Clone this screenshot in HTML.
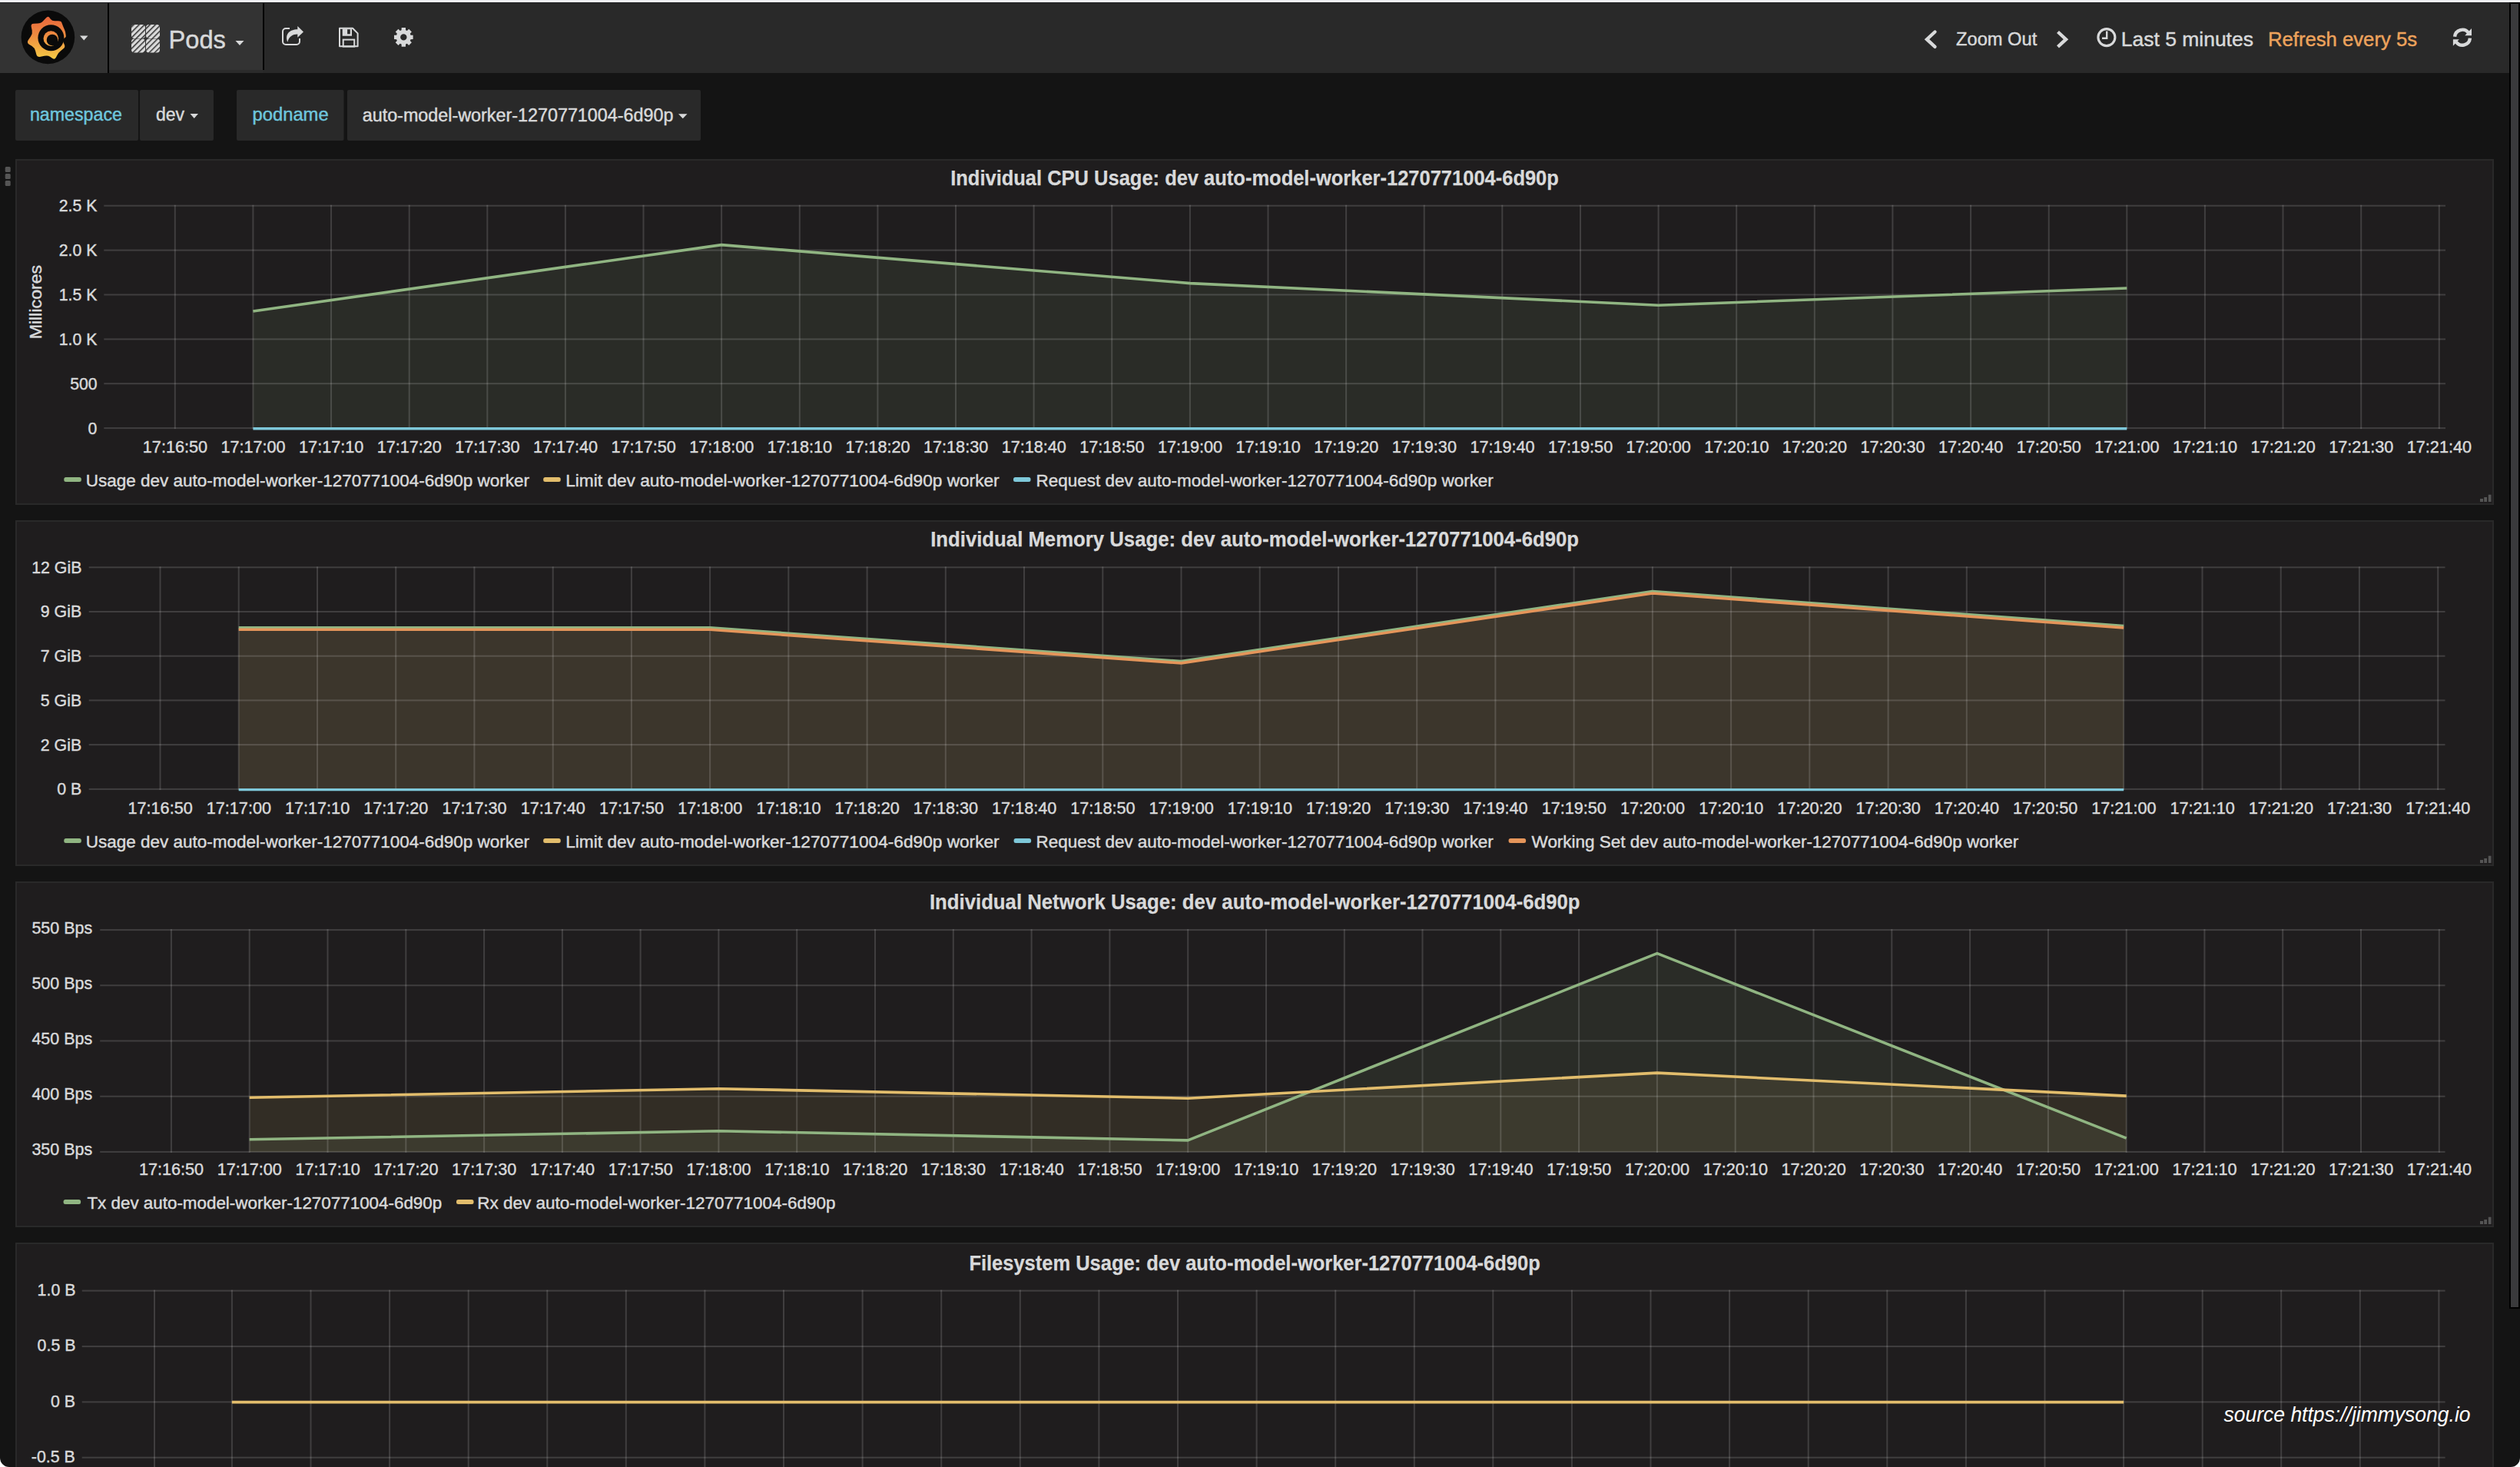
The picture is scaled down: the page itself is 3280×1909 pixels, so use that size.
<!DOCTYPE html>
<html><head><meta charset="utf-8"><title>Pods - Grafana</title>
<style>
html,body{margin:0;padding:0;background:#141414;width:3280px;height:1909px;overflow:hidden;}
svg{display:block;}
svg text{font-family:"Liberation Sans",sans-serif;}
</style></head><body>
<svg width="3280" height="1909" viewBox="0 0 3280 1909">
<rect x="0" y="0" width="3280" height="1909" fill="#141414"/>
<rect x="0" y="0" width="3280" height="3" fill="#eff0f4"/>
<rect x="0" y="3" width="3266" height="92" fill="#292929"/>
<rect x="0" y="3" width="3266" height="1" fill="#1e1f22"/>
<rect x="0" y="4" width="140" height="91" fill="#333333"/>
<rect x="142" y="4" width="200" height="87" fill="#333333"/>
<rect x="142" y="91" width="200" height="4" fill="#2b2b2b"/>
<rect x="140" y="4" width="2" height="91" fill="#000"/>
<rect x="342" y="4" width="2" height="87" fill="#000"/>
<defs><linearGradient id="lg" gradientUnits="userSpaceOnUse" x1="0" y1="18" x2="0" y2="78"><stop offset="0" stop-color="#e8603b"/><stop offset="0.45" stop-color="#ee8a40"/><stop offset="1" stop-color="#f5cc45"/></linearGradient><pattern id="hatch" patternUnits="userSpaceOnUse" width="5" height="5" patternTransform="rotate(-45)"><rect width="5" height="5" fill="#dadada"/><rect x="0" y="0" width="5" height="1.5" fill="#303030"/></pattern></defs>
<circle cx="62.4" cy="48.4" r="34.8" fill="#0a0a0a"/>
<path fill="url(#lg)" d="M59.49,23.63 Q62.40,20.40 64.06,22.58 L65.94,25.02 Q67.60,27.20 71.44,27.26 L75.76,27.34 Q79.60,27.40 80.43,29.67 L81.37,32.23 Q82.20,34.50 83.03,36.42 L83.97,38.58 Q84.80,40.50 85.22,42.87 L85.68,45.53 Q86.10,47.90 85.27,48.57 L84.33,49.33 Q83.50,50.00 82.83,50.83 L82.07,51.77 Q81.40,52.60 82.62,55.35 L83.98,58.45 Q85.20,61.20 82.26,63.60 L78.94,66.30 Q76.00,68.70 74.46,71.64 L72.74,74.96 Q71.20,77.90 68.32,75.98 L65.08,73.82 Q62.20,71.90 57.78,72.83 L52.82,73.87 Q48.40,74.80 47.31,70.77 L46.09,66.23 Q45.00,62.20 41.61,60.06 L37.79,57.64 Q34.40,55.50 37.02,51.69 L39.98,47.41 Q42.60,43.60 41.70,39.47 L40.70,34.83 Q39.80,30.70 44.12,30.64 L48.98,30.56 Q53.30,30.50 56.21,27.27 Z"/>
<circle cx="66.4" cy="49.3" r="17" fill="#0a0a0a"/>
<circle cx="66.3" cy="50.1" r="9.8" fill="url(#lg)"/>
<circle cx="68.0" cy="52.0" r="7.3" fill="#0a0a0a"/>
<circle cx="73.0" cy="56.6" r="3.8" fill="#0a0a0a"/>
<polygon points="104,46.5 114.5,46.5 109.25,52.5" fill="#d8d9da"/>
<rect x="171" y="32" width="18" height="18" rx="4" fill="url(#hatch)"/>
<rect x="190" y="32" width="18" height="18" rx="4" fill="url(#hatch)"/>
<rect x="171" y="50.5" width="18" height="18" rx="4" fill="url(#hatch)"/>
<rect x="190" y="50.5" width="18" height="18" rx="4" fill="url(#hatch)"/>
<text x="219.62" y="62.50" font-size="34" fill="#d8d9da" textLength="74.32" lengthAdjust="spacingAndGlyphs" stroke="#d8d9da" stroke-width="0.45">Pods</text>
<polygon points="306.5,53 317.5,53 312,59" fill="#d8d9da"/>
<path d="M377,37 H372 a4,4 0 0 0 -4,4 V54 a4,4 0 0 0 4,4 H386 a4,4 0 0 0 4,-4 V50" stroke="#d8d9da" stroke-width="2" fill="none"/>
<path d="M374.3,54.8 C370.5,45 376.5,38.3 387.3,38.3 V33.9 L395,41.4 L387.3,48.8 V44.5 C381,44.5 376,47.5 374.3,54.8 Z" fill="#d8d9da"/>
<path d="M442,36.8 H459 L465.6,43.4 V60.2 H442 Z" stroke="#d8d9da" stroke-width="2" fill="none" stroke-linejoin="round"/>
<path d="M445.7,37.5 H458 V46.8 H445.7 Z M452.1,38.2 V44.3 H455.8 V38.2 Z" fill="#d8d9da" fill-rule="evenodd"/>
<rect x="446.7" y="51.6" width="14.5" height="9" stroke="#d8d9da" stroke-width="2" fill="none"/>
<path fill="#d8d9da" fill-rule="evenodd" d="M522.55,39.20 L522.67,36.08 L527.93,36.08 L528.05,39.20 L529.86,39.95 L532.16,37.83 L535.87,41.54 L533.75,43.84 L534.50,45.65 L537.62,45.77 L537.62,51.03 L534.50,51.15 L533.75,52.96 L535.87,55.26 L532.16,58.97 L529.86,56.85 L528.05,57.60 L527.93,60.72 L522.67,60.72 L522.55,57.60 L520.74,56.85 L518.44,58.97 L514.73,55.26 L516.85,52.96 L516.10,51.15 L512.98,51.03 L512.98,45.77 L516.10,45.65 L516.85,43.84 L514.73,41.54 L518.44,37.83 L520.74,39.95 Z M529.5,48.4 A4.2,4.2 0 1 0 521.0999999999999,48.4 A4.2,4.2 0 1 0 529.5,48.4 Z"/>
<polyline points="2518.5,41.5 2508,51.2 2518.5,60.8" stroke="#d8d9da" stroke-width="4.4" fill="none" stroke-linecap="round"/>
<text x="2546.07" y="58.80" font-size="23" fill="#d8d9da" textLength="105.20" lengthAdjust="spacingAndGlyphs" stroke="#d8d9da" stroke-width="0.45">Zoom Out</text>
<polyline points="2678.5,41.5 2689,51.2 2678.5,60.8" stroke="#d8d9da" stroke-width="4.4" fill="none"/>
<circle cx="2741.9" cy="48.6" r="11" stroke="#d8d9da" stroke-width="3.1" fill="none"/>
<polyline points="2742.2,40.5 2742.2,49.8 2736,49.8" stroke="#d8d9da" stroke-width="2.4" fill="none"/>
<text x="2760.87" y="60.20" font-size="26" fill="#d8d9da" textLength="172.05" lengthAdjust="spacingAndGlyphs" stroke="#d8d9da" stroke-width="0.45">Last 5 minutes</text>
<text x="2952.03" y="60.20" font-size="26" fill="#eda35c" textLength="194.00" lengthAdjust="spacingAndGlyphs" stroke="#eda35c" stroke-width="0.45">Refresh every 5s</text>
<path d="M3195.1,47.8 A9.9,9.9 0 0 1 3213.1,43.0" stroke="#d8d9da" stroke-width="4.4" fill="none"/><polygon points="3217,37.1 3217,46.3 3208.2,46.3" fill="#d8d9da"/><path d="M3214.9,49.6 A9.9,9.9 0 0 1 3196.9,54.4" stroke="#d8d9da" stroke-width="4.4" fill="none"/><polygon points="3192.9,51.3 3192.9,59.7 3200.8,51.3" fill="#d8d9da"/>
<rect x="20" y="117" width="160" height="66" rx="2" fill="#292929"/>
<rect x="182" y="117" width="96" height="66" rx="2" fill="#292929"/>
<rect x="308" y="117" width="139.5" height="66" rx="2" fill="#292929"/>
<rect x="452" y="117" width="460" height="66" rx="2" fill="#292929"/>
<text x="38.98" y="157.30" font-size="23" fill="#6ec6dd" textLength="119.95" lengthAdjust="spacingAndGlyphs" stroke="#6ec6dd" stroke-width="0.45">namespace</text>
<text x="203.00" y="157.30" font-size="23" fill="#d8d9da" textLength="37.09" lengthAdjust="spacingAndGlyphs" stroke="#d8d9da" stroke-width="0.45">dev</text>
<polygon points="247.5,148 258,148 252.75,154" fill="#d8d9da"/>
<text x="328.47" y="157.30" font-size="23" fill="#6ec6dd" textLength="99.19" lengthAdjust="spacingAndGlyphs" stroke="#6ec6dd" stroke-width="0.45">podname</text>
<text x="471.69" y="158.30" font-size="23" fill="#d8d9da" textLength="404.77" lengthAdjust="spacingAndGlyphs" stroke="#d8d9da" stroke-width="0.45">auto-model-worker-1270771004-6d90p</text>
<polygon points="883,148.2 894.5,148.2 888.75,154.2" fill="#d8d9da"/>
<rect x="6.7" y="217" width="7" height="7" rx="1.5" fill="#555"/>
<rect x="6.7" y="226" width="7" height="7" rx="1.5" fill="#555"/>
<rect x="6.7" y="235" width="7" height="7" rx="1.5" fill="#555"/>
<rect x="21" y="208" width="3224" height="448" fill="#1f1d1e" stroke="#292929" stroke-width="2"/>
<text x="1237.18" y="241.00" font-size="28" fill="#d8d9da" font-weight="bold" textLength="791.70" lengthAdjust="spacingAndGlyphs" stroke="#d8d9da" stroke-width="0.25">Individual CPU Usage: dev auto-model-worker-1270771004-6d90p</text>
<path d="M329.4,557.1 L329.4,405.0 L939.1,318.6 L1548.9,368.6 L2158.6,397.2 L2768.3,375.0 L2768.3,557.1 Z" fill="#90b582" fill-opacity="0.1"/>
<rect x="135.3" y="266.7" width="3047.7" height="2" fill="#fff" fill-opacity="0.15"/>
<text x="76.78" y="275.10" font-size="22" fill="#d8d9da" textLength="49.58" lengthAdjust="spacingAndGlyphs" stroke="#d8d9da" stroke-width="0.45">2.5 K</text>
<rect x="135.3" y="324.6" width="3047.7" height="2" fill="#fff" fill-opacity="0.15"/>
<text x="76.78" y="333.00" font-size="22" fill="#d8d9da" textLength="49.58" lengthAdjust="spacingAndGlyphs" stroke="#d8d9da" stroke-width="0.45">2.0 K</text>
<rect x="135.3" y="382.5" width="3047.7" height="2" fill="#fff" fill-opacity="0.15"/>
<text x="76.78" y="390.90" font-size="22" fill="#d8d9da" textLength="49.58" lengthAdjust="spacingAndGlyphs" stroke="#d8d9da" stroke-width="0.45">1.5 K</text>
<rect x="135.3" y="440.4" width="3047.7" height="2" fill="#fff" fill-opacity="0.15"/>
<text x="76.78" y="448.80" font-size="22" fill="#d8d9da" textLength="49.58" lengthAdjust="spacingAndGlyphs" stroke="#d8d9da" stroke-width="0.45">1.0 K</text>
<rect x="135.3" y="498.2" width="3047.7" height="2" fill="#fff" fill-opacity="0.15"/>
<text x="91.26" y="506.60" font-size="22" fill="#d8d9da" textLength="35.43" lengthAdjust="spacingAndGlyphs" stroke="#d8d9da" stroke-width="0.45">500</text>
<rect x="135.3" y="556.1" width="3047.7" height="2" fill="#fff" fill-opacity="0.15"/>
<text x="114.42" y="564.50" font-size="22" fill="#d8d9da" textLength="11.82" lengthAdjust="spacingAndGlyphs" stroke="#d8d9da" stroke-width="0.45">0</text>
<rect x="226.8" y="266.7" width="2" height="291.4" fill="#fff" fill-opacity="0.15"/>
<text x="185.84" y="589.10" font-size="22" fill="#d8d9da" textLength="84.18" lengthAdjust="spacingAndGlyphs" stroke="#d8d9da" stroke-width="0.45">17:16:50</text>
<rect x="328.4" y="266.7" width="2" height="291.4" fill="#fff" fill-opacity="0.15"/>
<text x="287.46" y="589.10" font-size="22" fill="#d8d9da" textLength="84.18" lengthAdjust="spacingAndGlyphs" stroke="#d8d9da" stroke-width="0.45">17:17:00</text>
<rect x="430.0" y="266.7" width="2" height="291.4" fill="#fff" fill-opacity="0.15"/>
<text x="389.08" y="589.10" font-size="22" fill="#d8d9da" textLength="84.18" lengthAdjust="spacingAndGlyphs" stroke="#d8d9da" stroke-width="0.45">17:17:10</text>
<rect x="531.7" y="266.7" width="2" height="291.4" fill="#fff" fill-opacity="0.15"/>
<text x="490.70" y="589.10" font-size="22" fill="#d8d9da" textLength="84.18" lengthAdjust="spacingAndGlyphs" stroke="#d8d9da" stroke-width="0.45">17:17:20</text>
<rect x="633.3" y="266.7" width="2" height="291.4" fill="#fff" fill-opacity="0.15"/>
<text x="592.32" y="589.10" font-size="22" fill="#d8d9da" textLength="84.18" lengthAdjust="spacingAndGlyphs" stroke="#d8d9da" stroke-width="0.45">17:17:30</text>
<rect x="734.9" y="266.7" width="2" height="291.4" fill="#fff" fill-opacity="0.15"/>
<text x="693.94" y="589.10" font-size="22" fill="#d8d9da" textLength="84.18" lengthAdjust="spacingAndGlyphs" stroke="#d8d9da" stroke-width="0.45">17:17:40</text>
<rect x="836.5" y="266.7" width="2" height="291.4" fill="#fff" fill-opacity="0.15"/>
<text x="795.56" y="589.10" font-size="22" fill="#d8d9da" textLength="84.18" lengthAdjust="spacingAndGlyphs" stroke="#d8d9da" stroke-width="0.45">17:17:50</text>
<rect x="938.1" y="266.7" width="2" height="291.4" fill="#fff" fill-opacity="0.15"/>
<text x="897.18" y="589.10" font-size="22" fill="#d8d9da" textLength="84.18" lengthAdjust="spacingAndGlyphs" stroke="#d8d9da" stroke-width="0.45">17:18:00</text>
<rect x="1039.8" y="266.7" width="2" height="291.4" fill="#fff" fill-opacity="0.15"/>
<text x="998.80" y="589.10" font-size="22" fill="#d8d9da" textLength="84.18" lengthAdjust="spacingAndGlyphs" stroke="#d8d9da" stroke-width="0.45">17:18:10</text>
<rect x="1141.4" y="266.7" width="2" height="291.4" fill="#fff" fill-opacity="0.15"/>
<text x="1100.42" y="589.10" font-size="22" fill="#d8d9da" textLength="84.18" lengthAdjust="spacingAndGlyphs" stroke="#d8d9da" stroke-width="0.45">17:18:20</text>
<rect x="1243.0" y="266.7" width="2" height="291.4" fill="#fff" fill-opacity="0.15"/>
<text x="1202.04" y="589.10" font-size="22" fill="#d8d9da" textLength="84.18" lengthAdjust="spacingAndGlyphs" stroke="#d8d9da" stroke-width="0.45">17:18:30</text>
<rect x="1344.6" y="266.7" width="2" height="291.4" fill="#fff" fill-opacity="0.15"/>
<text x="1303.66" y="589.10" font-size="22" fill="#d8d9da" textLength="84.18" lengthAdjust="spacingAndGlyphs" stroke="#d8d9da" stroke-width="0.45">17:18:40</text>
<rect x="1446.2" y="266.7" width="2" height="291.4" fill="#fff" fill-opacity="0.15"/>
<text x="1405.28" y="589.10" font-size="22" fill="#d8d9da" textLength="84.18" lengthAdjust="spacingAndGlyphs" stroke="#d8d9da" stroke-width="0.45">17:18:50</text>
<rect x="1547.9" y="266.7" width="2" height="291.4" fill="#fff" fill-opacity="0.15"/>
<text x="1506.90" y="589.10" font-size="22" fill="#d8d9da" textLength="84.18" lengthAdjust="spacingAndGlyphs" stroke="#d8d9da" stroke-width="0.45">17:19:00</text>
<rect x="1649.5" y="266.7" width="2" height="291.4" fill="#fff" fill-opacity="0.15"/>
<text x="1608.52" y="589.10" font-size="22" fill="#d8d9da" textLength="84.18" lengthAdjust="spacingAndGlyphs" stroke="#d8d9da" stroke-width="0.45">17:19:10</text>
<rect x="1751.1" y="266.7" width="2" height="291.4" fill="#fff" fill-opacity="0.15"/>
<text x="1710.14" y="589.10" font-size="22" fill="#d8d9da" textLength="84.18" lengthAdjust="spacingAndGlyphs" stroke="#d8d9da" stroke-width="0.45">17:19:20</text>
<rect x="1852.7" y="266.7" width="2" height="291.4" fill="#fff" fill-opacity="0.15"/>
<text x="1811.76" y="589.10" font-size="22" fill="#d8d9da" textLength="84.18" lengthAdjust="spacingAndGlyphs" stroke="#d8d9da" stroke-width="0.45">17:19:30</text>
<rect x="1954.3" y="266.7" width="2" height="291.4" fill="#fff" fill-opacity="0.15"/>
<text x="1913.38" y="589.10" font-size="22" fill="#d8d9da" textLength="84.18" lengthAdjust="spacingAndGlyphs" stroke="#d8d9da" stroke-width="0.45">17:19:40</text>
<rect x="2056.0" y="266.7" width="2" height="291.4" fill="#fff" fill-opacity="0.15"/>
<text x="2015.00" y="589.10" font-size="22" fill="#d8d9da" textLength="84.18" lengthAdjust="spacingAndGlyphs" stroke="#d8d9da" stroke-width="0.45">17:19:50</text>
<rect x="2157.6" y="266.7" width="2" height="291.4" fill="#fff" fill-opacity="0.15"/>
<text x="2116.62" y="589.10" font-size="22" fill="#d8d9da" textLength="84.18" lengthAdjust="spacingAndGlyphs" stroke="#d8d9da" stroke-width="0.45">17:20:00</text>
<rect x="2259.2" y="266.7" width="2" height="291.4" fill="#fff" fill-opacity="0.15"/>
<text x="2218.24" y="589.10" font-size="22" fill="#d8d9da" textLength="84.18" lengthAdjust="spacingAndGlyphs" stroke="#d8d9da" stroke-width="0.45">17:20:10</text>
<rect x="2360.8" y="266.7" width="2" height="291.4" fill="#fff" fill-opacity="0.15"/>
<text x="2319.86" y="589.10" font-size="22" fill="#d8d9da" textLength="84.18" lengthAdjust="spacingAndGlyphs" stroke="#d8d9da" stroke-width="0.45">17:20:20</text>
<rect x="2462.4" y="266.7" width="2" height="291.4" fill="#fff" fill-opacity="0.15"/>
<text x="2421.48" y="589.10" font-size="22" fill="#d8d9da" textLength="84.18" lengthAdjust="spacingAndGlyphs" stroke="#d8d9da" stroke-width="0.45">17:20:30</text>
<rect x="2564.1" y="266.7" width="2" height="291.4" fill="#fff" fill-opacity="0.15"/>
<text x="2523.10" y="589.10" font-size="22" fill="#d8d9da" textLength="84.18" lengthAdjust="spacingAndGlyphs" stroke="#d8d9da" stroke-width="0.45">17:20:40</text>
<rect x="2665.7" y="266.7" width="2" height="291.4" fill="#fff" fill-opacity="0.15"/>
<text x="2624.72" y="589.10" font-size="22" fill="#d8d9da" textLength="84.18" lengthAdjust="spacingAndGlyphs" stroke="#d8d9da" stroke-width="0.45">17:20:50</text>
<rect x="2767.3" y="266.7" width="2" height="291.4" fill="#fff" fill-opacity="0.15"/>
<text x="2726.34" y="589.10" font-size="22" fill="#d8d9da" textLength="84.18" lengthAdjust="spacingAndGlyphs" stroke="#d8d9da" stroke-width="0.45">17:21:00</text>
<rect x="2868.9" y="266.7" width="2" height="291.4" fill="#fff" fill-opacity="0.15"/>
<text x="2827.96" y="589.10" font-size="22" fill="#d8d9da" textLength="84.18" lengthAdjust="spacingAndGlyphs" stroke="#d8d9da" stroke-width="0.45">17:21:10</text>
<rect x="2970.5" y="266.7" width="2" height="291.4" fill="#fff" fill-opacity="0.15"/>
<text x="2929.58" y="589.10" font-size="22" fill="#d8d9da" textLength="84.18" lengthAdjust="spacingAndGlyphs" stroke="#d8d9da" stroke-width="0.45">17:21:20</text>
<rect x="3072.2" y="266.7" width="2" height="291.4" fill="#fff" fill-opacity="0.15"/>
<text x="3031.20" y="589.10" font-size="22" fill="#d8d9da" textLength="84.18" lengthAdjust="spacingAndGlyphs" stroke="#d8d9da" stroke-width="0.45">17:21:30</text>
<rect x="3173.8" y="266.7" width="2" height="291.4" fill="#fff" fill-opacity="0.15"/>
<text x="3132.82" y="589.10" font-size="22" fill="#d8d9da" textLength="84.18" lengthAdjust="spacingAndGlyphs" stroke="#d8d9da" stroke-width="0.45">17:21:40</text>
<polyline points="329.4,405.0 939.1,318.6 1548.9,368.6 2158.6,397.2 2768.3,375.0" stroke="#90b582" stroke-width="3.6" fill="none" stroke-linejoin="round"/>
<polyline points="329.4,557.8 2768.3,557.8" stroke="#7ec8d9" stroke-width="3.4" fill="none" stroke-linejoin="round"/>
<rect x="83.3" y="621" width="22.5" height="6" rx="2.5" fill="#90b582"/>
<text x="111.86" y="632.80" font-size="22" fill="#d8d9da" textLength="577.04" lengthAdjust="spacingAndGlyphs" stroke="#d8d9da" stroke-width="0.45">Usage dev auto-model-worker-1270771004-6d90p worker</text>
<rect x="707.2" y="621" width="22.5" height="6" rx="2.5" fill="#e2bd6c"/>
<text x="736.24" y="632.80" font-size="22" fill="#d8d9da" textLength="564.42" lengthAdjust="spacingAndGlyphs" stroke="#d8d9da" stroke-width="0.45">Limit dev auto-model-worker-1270771004-6d90p worker</text>
<rect x="1319.0" y="621" width="22.5" height="6" rx="2.5" fill="#7ec8d9"/>
<text x="1348.56" y="632.80" font-size="22" fill="#d8d9da" textLength="595.29" lengthAdjust="spacingAndGlyphs" stroke="#d8d9da" stroke-width="0.45">Request dev auto-model-worker-1270771004-6d90p worker</text>
<rect x="3228" y="649" width="4" height="4" fill="#555"/><rect x="3233.2" y="647" width="3.8" height="6" fill="#555"/><rect x="3238.8" y="643.7" width="3.7" height="9.3" fill="#555"/>
<text x="343.39" y="0.00" font-size="22" fill="#d8d9da" textLength="96.53" lengthAdjust="spacingAndGlyphs" transform="translate(54,784.7) rotate(-90 0 0)" stroke="#d8d9da" stroke-width="0.45">Millicores</text>
<rect x="21" y="678" width="3224" height="448" fill="#1f1d1e" stroke="#292929" stroke-width="2"/>
<text x="1211.16" y="711.10" font-size="28" fill="#d8d9da" font-weight="bold" textLength="843.94" lengthAdjust="spacingAndGlyphs" stroke="#d8d9da" stroke-width="0.25">Individual Memory Usage: dev auto-model-worker-1270771004-6d90p</text>
<path d="M310.7,1026.9 L310.7,816.9 L924.1,816.9 L1537.5,860.5 L2150.9,769.6 L2764.2,814.5 L2764.2,1026.9 Z" fill="#90b582" fill-opacity="0.1"/>
<path d="M310.7,1026.9 L310.7,819.3 L924.1,819.3 L1537.5,862.9 L2150.9,772.0 L2764.2,816.9 L2764.2,1026.9 Z" fill="#e5955a" fill-opacity="0.1"/>
<rect x="115.7" y="737.3" width="3066.8" height="2" fill="#fff" fill-opacity="0.15"/>
<text x="41.18" y="745.70" font-size="22" fill="#d8d9da" textLength="65.25" lengthAdjust="spacingAndGlyphs" stroke="#d8d9da" stroke-width="0.45">12 GiB</text>
<rect x="115.7" y="795.0" width="3066.8" height="2" fill="#fff" fill-opacity="0.15"/>
<text x="52.82" y="803.40" font-size="22" fill="#d8d9da" textLength="53.38" lengthAdjust="spacingAndGlyphs" stroke="#d8d9da" stroke-width="0.45">9 GiB</text>
<rect x="115.7" y="852.7" width="3066.8" height="2" fill="#fff" fill-opacity="0.15"/>
<text x="52.82" y="861.10" font-size="22" fill="#d8d9da" textLength="53.38" lengthAdjust="spacingAndGlyphs" stroke="#d8d9da" stroke-width="0.45">7 GiB</text>
<rect x="115.7" y="910.4" width="3066.8" height="2" fill="#fff" fill-opacity="0.15"/>
<text x="52.82" y="918.80" font-size="22" fill="#d8d9da" textLength="53.38" lengthAdjust="spacingAndGlyphs" stroke="#d8d9da" stroke-width="0.45">5 GiB</text>
<rect x="115.7" y="968.1" width="3066.8" height="2" fill="#fff" fill-opacity="0.15"/>
<text x="52.82" y="976.50" font-size="22" fill="#d8d9da" textLength="53.38" lengthAdjust="spacingAndGlyphs" stroke="#d8d9da" stroke-width="0.45">2 GiB</text>
<rect x="115.7" y="1025.9" width="3066.8" height="2" fill="#fff" fill-opacity="0.15"/>
<text x="74.16" y="1034.30" font-size="22" fill="#d8d9da" textLength="32.04" lengthAdjust="spacingAndGlyphs" stroke="#d8d9da" stroke-width="0.45">0 B</text>
<rect x="207.5" y="737.3" width="2" height="290.6" fill="#fff" fill-opacity="0.15"/>
<text x="166.54" y="1059.10" font-size="22" fill="#d8d9da" textLength="84.18" lengthAdjust="spacingAndGlyphs" stroke="#d8d9da" stroke-width="0.45">17:16:50</text>
<rect x="309.7" y="737.3" width="2" height="290.6" fill="#fff" fill-opacity="0.15"/>
<text x="268.77" y="1059.10" font-size="22" fill="#d8d9da" textLength="84.18" lengthAdjust="spacingAndGlyphs" stroke="#d8d9da" stroke-width="0.45">17:17:00</text>
<rect x="412.0" y="737.3" width="2" height="290.6" fill="#fff" fill-opacity="0.15"/>
<text x="371.00" y="1059.10" font-size="22" fill="#d8d9da" textLength="84.18" lengthAdjust="spacingAndGlyphs" stroke="#d8d9da" stroke-width="0.45">17:17:10</text>
<rect x="514.2" y="737.3" width="2" height="290.6" fill="#fff" fill-opacity="0.15"/>
<text x="473.23" y="1059.10" font-size="22" fill="#d8d9da" textLength="84.18" lengthAdjust="spacingAndGlyphs" stroke="#d8d9da" stroke-width="0.45">17:17:20</text>
<rect x="616.4" y="737.3" width="2" height="290.6" fill="#fff" fill-opacity="0.15"/>
<text x="575.46" y="1059.10" font-size="22" fill="#d8d9da" textLength="84.18" lengthAdjust="spacingAndGlyphs" stroke="#d8d9da" stroke-width="0.45">17:17:30</text>
<rect x="718.7" y="737.3" width="2" height="290.6" fill="#fff" fill-opacity="0.15"/>
<text x="677.69" y="1059.10" font-size="22" fill="#d8d9da" textLength="84.18" lengthAdjust="spacingAndGlyphs" stroke="#d8d9da" stroke-width="0.45">17:17:40</text>
<rect x="820.9" y="737.3" width="2" height="290.6" fill="#fff" fill-opacity="0.15"/>
<text x="779.92" y="1059.10" font-size="22" fill="#d8d9da" textLength="84.18" lengthAdjust="spacingAndGlyphs" stroke="#d8d9da" stroke-width="0.45">17:17:50</text>
<rect x="923.1" y="737.3" width="2" height="290.6" fill="#fff" fill-opacity="0.15"/>
<text x="882.15" y="1059.10" font-size="22" fill="#d8d9da" textLength="84.18" lengthAdjust="spacingAndGlyphs" stroke="#d8d9da" stroke-width="0.45">17:18:00</text>
<rect x="1025.3" y="737.3" width="2" height="290.6" fill="#fff" fill-opacity="0.15"/>
<text x="984.38" y="1059.10" font-size="22" fill="#d8d9da" textLength="84.18" lengthAdjust="spacingAndGlyphs" stroke="#d8d9da" stroke-width="0.45">17:18:10</text>
<rect x="1127.6" y="737.3" width="2" height="290.6" fill="#fff" fill-opacity="0.15"/>
<text x="1086.61" y="1059.10" font-size="22" fill="#d8d9da" textLength="84.18" lengthAdjust="spacingAndGlyphs" stroke="#d8d9da" stroke-width="0.45">17:18:20</text>
<rect x="1229.8" y="737.3" width="2" height="290.6" fill="#fff" fill-opacity="0.15"/>
<text x="1188.84" y="1059.10" font-size="22" fill="#d8d9da" textLength="84.18" lengthAdjust="spacingAndGlyphs" stroke="#d8d9da" stroke-width="0.45">17:18:30</text>
<rect x="1332.0" y="737.3" width="2" height="290.6" fill="#fff" fill-opacity="0.15"/>
<text x="1291.07" y="1059.10" font-size="22" fill="#d8d9da" textLength="84.18" lengthAdjust="spacingAndGlyphs" stroke="#d8d9da" stroke-width="0.45">17:18:40</text>
<rect x="1434.3" y="737.3" width="2" height="290.6" fill="#fff" fill-opacity="0.15"/>
<text x="1393.30" y="1059.10" font-size="22" fill="#d8d9da" textLength="84.18" lengthAdjust="spacingAndGlyphs" stroke="#d8d9da" stroke-width="0.45">17:18:50</text>
<rect x="1536.5" y="737.3" width="2" height="290.6" fill="#fff" fill-opacity="0.15"/>
<text x="1495.53" y="1059.10" font-size="22" fill="#d8d9da" textLength="84.18" lengthAdjust="spacingAndGlyphs" stroke="#d8d9da" stroke-width="0.45">17:19:00</text>
<rect x="1638.7" y="737.3" width="2" height="290.6" fill="#fff" fill-opacity="0.15"/>
<text x="1597.76" y="1059.10" font-size="22" fill="#d8d9da" textLength="84.18" lengthAdjust="spacingAndGlyphs" stroke="#d8d9da" stroke-width="0.45">17:19:10</text>
<rect x="1741.0" y="737.3" width="2" height="290.6" fill="#fff" fill-opacity="0.15"/>
<text x="1699.99" y="1059.10" font-size="22" fill="#d8d9da" textLength="84.18" lengthAdjust="spacingAndGlyphs" stroke="#d8d9da" stroke-width="0.45">17:19:20</text>
<rect x="1843.2" y="737.3" width="2" height="290.6" fill="#fff" fill-opacity="0.15"/>
<text x="1802.22" y="1059.10" font-size="22" fill="#d8d9da" textLength="84.18" lengthAdjust="spacingAndGlyphs" stroke="#d8d9da" stroke-width="0.45">17:19:30</text>
<rect x="1945.4" y="737.3" width="2" height="290.6" fill="#fff" fill-opacity="0.15"/>
<text x="1904.45" y="1059.10" font-size="22" fill="#d8d9da" textLength="84.18" lengthAdjust="spacingAndGlyphs" stroke="#d8d9da" stroke-width="0.45">17:19:40</text>
<rect x="2047.6" y="737.3" width="2" height="290.6" fill="#fff" fill-opacity="0.15"/>
<text x="2006.68" y="1059.10" font-size="22" fill="#d8d9da" textLength="84.18" lengthAdjust="spacingAndGlyphs" stroke="#d8d9da" stroke-width="0.45">17:19:50</text>
<rect x="2149.9" y="737.3" width="2" height="290.6" fill="#fff" fill-opacity="0.15"/>
<text x="2108.91" y="1059.10" font-size="22" fill="#d8d9da" textLength="84.18" lengthAdjust="spacingAndGlyphs" stroke="#d8d9da" stroke-width="0.45">17:20:00</text>
<rect x="2252.1" y="737.3" width="2" height="290.6" fill="#fff" fill-opacity="0.15"/>
<text x="2211.14" y="1059.10" font-size="22" fill="#d8d9da" textLength="84.18" lengthAdjust="spacingAndGlyphs" stroke="#d8d9da" stroke-width="0.45">17:20:10</text>
<rect x="2354.3" y="737.3" width="2" height="290.6" fill="#fff" fill-opacity="0.15"/>
<text x="2313.37" y="1059.10" font-size="22" fill="#d8d9da" textLength="84.18" lengthAdjust="spacingAndGlyphs" stroke="#d8d9da" stroke-width="0.45">17:20:20</text>
<rect x="2456.6" y="737.3" width="2" height="290.6" fill="#fff" fill-opacity="0.15"/>
<text x="2415.60" y="1059.10" font-size="22" fill="#d8d9da" textLength="84.18" lengthAdjust="spacingAndGlyphs" stroke="#d8d9da" stroke-width="0.45">17:20:30</text>
<rect x="2558.8" y="737.3" width="2" height="290.6" fill="#fff" fill-opacity="0.15"/>
<text x="2517.83" y="1059.10" font-size="22" fill="#d8d9da" textLength="84.18" lengthAdjust="spacingAndGlyphs" stroke="#d8d9da" stroke-width="0.45">17:20:40</text>
<rect x="2661.0" y="737.3" width="2" height="290.6" fill="#fff" fill-opacity="0.15"/>
<text x="2620.06" y="1059.10" font-size="22" fill="#d8d9da" textLength="84.18" lengthAdjust="spacingAndGlyphs" stroke="#d8d9da" stroke-width="0.45">17:20:50</text>
<rect x="2763.2" y="737.3" width="2" height="290.6" fill="#fff" fill-opacity="0.15"/>
<text x="2722.29" y="1059.10" font-size="22" fill="#d8d9da" textLength="84.18" lengthAdjust="spacingAndGlyphs" stroke="#d8d9da" stroke-width="0.45">17:21:00</text>
<rect x="2865.5" y="737.3" width="2" height="290.6" fill="#fff" fill-opacity="0.15"/>
<text x="2824.52" y="1059.10" font-size="22" fill="#d8d9da" textLength="84.18" lengthAdjust="spacingAndGlyphs" stroke="#d8d9da" stroke-width="0.45">17:21:10</text>
<rect x="2967.7" y="737.3" width="2" height="290.6" fill="#fff" fill-opacity="0.15"/>
<text x="2926.75" y="1059.10" font-size="22" fill="#d8d9da" textLength="84.18" lengthAdjust="spacingAndGlyphs" stroke="#d8d9da" stroke-width="0.45">17:21:20</text>
<rect x="3069.9" y="737.3" width="2" height="290.6" fill="#fff" fill-opacity="0.15"/>
<text x="3028.98" y="1059.10" font-size="22" fill="#d8d9da" textLength="84.18" lengthAdjust="spacingAndGlyphs" stroke="#d8d9da" stroke-width="0.45">17:21:30</text>
<rect x="3172.2" y="737.3" width="2" height="290.6" fill="#fff" fill-opacity="0.15"/>
<text x="3131.21" y="1059.10" font-size="22" fill="#d8d9da" textLength="84.18" lengthAdjust="spacingAndGlyphs" stroke="#d8d9da" stroke-width="0.45">17:21:40</text>
<polyline points="310.7,816.9 924.1,816.9 1537.5,860.5 2150.9,769.6 2764.2,814.5" stroke="#90b582" stroke-width="3.6" fill="none" stroke-linejoin="round"/>
<polyline points="310.7,819.3 924.1,819.3 1537.5,862.9 2150.9,772.0 2764.2,816.9" stroke="#e5955a" stroke-width="3.6" fill="none" stroke-linejoin="round"/>
<polyline points="310.7,1027.6 2764.2,1027.6" stroke="#7ec8d9" stroke-width="3.4" fill="none" stroke-linejoin="round"/>
<rect x="83.3" y="1091" width="22.5" height="6" rx="2.5" fill="#90b582"/>
<text x="111.86" y="1102.80" font-size="22" fill="#d8d9da" textLength="577.04" lengthAdjust="spacingAndGlyphs" stroke="#d8d9da" stroke-width="0.45">Usage dev auto-model-worker-1270771004-6d90p worker</text>
<rect x="707.2" y="1091" width="22.5" height="6" rx="2.5" fill="#e2bd6c"/>
<text x="736.24" y="1102.80" font-size="22" fill="#d8d9da" textLength="564.42" lengthAdjust="spacingAndGlyphs" stroke="#d8d9da" stroke-width="0.45">Limit dev auto-model-worker-1270771004-6d90p worker</text>
<rect x="1319.6" y="1091" width="22.5" height="6" rx="2.5" fill="#7ec8d9"/>
<text x="1348.56" y="1102.80" font-size="22" fill="#d8d9da" textLength="595.29" lengthAdjust="spacingAndGlyphs" stroke="#d8d9da" stroke-width="0.45">Request dev auto-model-worker-1270771004-6d90p worker</text>
<rect x="1963.6" y="1091" width="22.5" height="6" rx="2.5" fill="#e5955a"/>
<text x="1993.60" y="1102.80" font-size="22" fill="#d8d9da" textLength="633.72" lengthAdjust="spacingAndGlyphs" stroke="#d8d9da" stroke-width="0.45">Working Set dev auto-model-worker-1270771004-6d90p worker</text>
<rect x="3228" y="1119" width="4" height="4" fill="#555"/><rect x="3233.2" y="1117" width="3.8" height="6" fill="#555"/><rect x="3238.8" y="1113.7" width="3.7" height="9.3" fill="#555"/>
<rect x="21" y="1148" width="3224" height="448" fill="#1f1d1e" stroke="#292929" stroke-width="2"/>
<text x="1209.96" y="1182.90" font-size="28" fill="#d8d9da" font-weight="bold" textLength="846.64" lengthAdjust="spacingAndGlyphs" stroke="#d8d9da" stroke-width="0.25">Individual Network Usage: dev auto-model-worker-1270771004-6d90p</text>
<path d="M324.7,1498.9 L324.7,1482.8 L935.4,1471.7 L1546.2,1483.9 L2156.9,1240.6 L2767.7,1481.1 L2767.7,1498.9 Z" fill="#90b582" fill-opacity="0.1"/>
<path d="M324.7,1498.9 L324.7,1428.3 L935.4,1416.7 L1546.2,1429.2 L2156.9,1396.1 L2767.7,1426.1 L2767.7,1498.9 Z" fill="#e2bd6c" fill-opacity="0.1"/>
<rect x="130.2" y="1209.1" width="3052.3" height="2" fill="#fff" fill-opacity="0.15"/>
<text x="41.40" y="1214.50" font-size="22" fill="#d8d9da" textLength="78.72" lengthAdjust="spacingAndGlyphs" stroke="#d8d9da" stroke-width="0.45">550 Bps</text>
<rect x="130.2" y="1281.3" width="3052.3" height="2" fill="#fff" fill-opacity="0.15"/>
<text x="41.40" y="1286.70" font-size="22" fill="#d8d9da" textLength="78.72" lengthAdjust="spacingAndGlyphs" stroke="#d8d9da" stroke-width="0.45">500 Bps</text>
<rect x="130.2" y="1353.5" width="3052.3" height="2" fill="#fff" fill-opacity="0.15"/>
<text x="41.40" y="1358.90" font-size="22" fill="#d8d9da" textLength="78.72" lengthAdjust="spacingAndGlyphs" stroke="#d8d9da" stroke-width="0.45">450 Bps</text>
<rect x="130.2" y="1425.7" width="3052.3" height="2" fill="#fff" fill-opacity="0.15"/>
<text x="41.40" y="1431.10" font-size="22" fill="#d8d9da" textLength="78.72" lengthAdjust="spacingAndGlyphs" stroke="#d8d9da" stroke-width="0.45">400 Bps</text>
<rect x="130.2" y="1497.9" width="3052.3" height="2" fill="#fff" fill-opacity="0.15"/>
<text x="41.40" y="1503.30" font-size="22" fill="#d8d9da" textLength="78.72" lengthAdjust="spacingAndGlyphs" stroke="#d8d9da" stroke-width="0.45">350 Bps</text>
<rect x="221.9" y="1209.1" width="2" height="290.8" fill="#fff" fill-opacity="0.15"/>
<text x="180.94" y="1529.10" font-size="22" fill="#d8d9da" textLength="84.18" lengthAdjust="spacingAndGlyphs" stroke="#d8d9da" stroke-width="0.45">17:16:50</text>
<rect x="323.7" y="1209.1" width="2" height="290.8" fill="#fff" fill-opacity="0.15"/>
<text x="282.73" y="1529.10" font-size="22" fill="#d8d9da" textLength="84.18" lengthAdjust="spacingAndGlyphs" stroke="#d8d9da" stroke-width="0.45">17:17:00</text>
<rect x="425.5" y="1209.1" width="2" height="290.8" fill="#fff" fill-opacity="0.15"/>
<text x="384.52" y="1529.10" font-size="22" fill="#d8d9da" textLength="84.18" lengthAdjust="spacingAndGlyphs" stroke="#d8d9da" stroke-width="0.45">17:17:10</text>
<rect x="527.3" y="1209.1" width="2" height="290.8" fill="#fff" fill-opacity="0.15"/>
<text x="486.31" y="1529.10" font-size="22" fill="#d8d9da" textLength="84.18" lengthAdjust="spacingAndGlyphs" stroke="#d8d9da" stroke-width="0.45">17:17:20</text>
<rect x="629.1" y="1209.1" width="2" height="290.8" fill="#fff" fill-opacity="0.15"/>
<text x="588.10" y="1529.10" font-size="22" fill="#d8d9da" textLength="84.18" lengthAdjust="spacingAndGlyphs" stroke="#d8d9da" stroke-width="0.45">17:17:30</text>
<rect x="730.9" y="1209.1" width="2" height="290.8" fill="#fff" fill-opacity="0.15"/>
<text x="689.89" y="1529.10" font-size="22" fill="#d8d9da" textLength="84.18" lengthAdjust="spacingAndGlyphs" stroke="#d8d9da" stroke-width="0.45">17:17:40</text>
<rect x="832.6" y="1209.1" width="2" height="290.8" fill="#fff" fill-opacity="0.15"/>
<text x="791.68" y="1529.10" font-size="22" fill="#d8d9da" textLength="84.18" lengthAdjust="spacingAndGlyphs" stroke="#d8d9da" stroke-width="0.45">17:17:50</text>
<rect x="934.4" y="1209.1" width="2" height="290.8" fill="#fff" fill-opacity="0.15"/>
<text x="893.47" y="1529.10" font-size="22" fill="#d8d9da" textLength="84.18" lengthAdjust="spacingAndGlyphs" stroke="#d8d9da" stroke-width="0.45">17:18:00</text>
<rect x="1036.2" y="1209.1" width="2" height="290.8" fill="#fff" fill-opacity="0.15"/>
<text x="995.26" y="1529.10" font-size="22" fill="#d8d9da" textLength="84.18" lengthAdjust="spacingAndGlyphs" stroke="#d8d9da" stroke-width="0.45">17:18:10</text>
<rect x="1138.0" y="1209.1" width="2" height="290.8" fill="#fff" fill-opacity="0.15"/>
<text x="1097.05" y="1529.10" font-size="22" fill="#d8d9da" textLength="84.18" lengthAdjust="spacingAndGlyphs" stroke="#d8d9da" stroke-width="0.45">17:18:20</text>
<rect x="1239.8" y="1209.1" width="2" height="290.8" fill="#fff" fill-opacity="0.15"/>
<text x="1198.84" y="1529.10" font-size="22" fill="#d8d9da" textLength="84.18" lengthAdjust="spacingAndGlyphs" stroke="#d8d9da" stroke-width="0.45">17:18:30</text>
<rect x="1341.6" y="1209.1" width="2" height="290.8" fill="#fff" fill-opacity="0.15"/>
<text x="1300.63" y="1529.10" font-size="22" fill="#d8d9da" textLength="84.18" lengthAdjust="spacingAndGlyphs" stroke="#d8d9da" stroke-width="0.45">17:18:40</text>
<rect x="1443.4" y="1209.1" width="2" height="290.8" fill="#fff" fill-opacity="0.15"/>
<text x="1402.42" y="1529.10" font-size="22" fill="#d8d9da" textLength="84.18" lengthAdjust="spacingAndGlyphs" stroke="#d8d9da" stroke-width="0.45">17:18:50</text>
<rect x="1545.2" y="1209.1" width="2" height="290.8" fill="#fff" fill-opacity="0.15"/>
<text x="1504.21" y="1529.10" font-size="22" fill="#d8d9da" textLength="84.18" lengthAdjust="spacingAndGlyphs" stroke="#d8d9da" stroke-width="0.45">17:19:00</text>
<rect x="1647.0" y="1209.1" width="2" height="290.8" fill="#fff" fill-opacity="0.15"/>
<text x="1606.00" y="1529.10" font-size="22" fill="#d8d9da" textLength="84.18" lengthAdjust="spacingAndGlyphs" stroke="#d8d9da" stroke-width="0.45">17:19:10</text>
<rect x="1748.8" y="1209.1" width="2" height="290.8" fill="#fff" fill-opacity="0.15"/>
<text x="1707.79" y="1529.10" font-size="22" fill="#d8d9da" textLength="84.18" lengthAdjust="spacingAndGlyphs" stroke="#d8d9da" stroke-width="0.45">17:19:20</text>
<rect x="1850.5" y="1209.1" width="2" height="290.8" fill="#fff" fill-opacity="0.15"/>
<text x="1809.58" y="1529.10" font-size="22" fill="#d8d9da" textLength="84.18" lengthAdjust="spacingAndGlyphs" stroke="#d8d9da" stroke-width="0.45">17:19:30</text>
<rect x="1952.3" y="1209.1" width="2" height="290.8" fill="#fff" fill-opacity="0.15"/>
<text x="1911.37" y="1529.10" font-size="22" fill="#d8d9da" textLength="84.18" lengthAdjust="spacingAndGlyphs" stroke="#d8d9da" stroke-width="0.45">17:19:40</text>
<rect x="2054.1" y="1209.1" width="2" height="290.8" fill="#fff" fill-opacity="0.15"/>
<text x="2013.16" y="1529.10" font-size="22" fill="#d8d9da" textLength="84.18" lengthAdjust="spacingAndGlyphs" stroke="#d8d9da" stroke-width="0.45">17:19:50</text>
<rect x="2155.9" y="1209.1" width="2" height="290.8" fill="#fff" fill-opacity="0.15"/>
<text x="2114.95" y="1529.10" font-size="22" fill="#d8d9da" textLength="84.18" lengthAdjust="spacingAndGlyphs" stroke="#d8d9da" stroke-width="0.45">17:20:00</text>
<rect x="2257.7" y="1209.1" width="2" height="290.8" fill="#fff" fill-opacity="0.15"/>
<text x="2216.74" y="1529.10" font-size="22" fill="#d8d9da" textLength="84.18" lengthAdjust="spacingAndGlyphs" stroke="#d8d9da" stroke-width="0.45">17:20:10</text>
<rect x="2359.5" y="1209.1" width="2" height="290.8" fill="#fff" fill-opacity="0.15"/>
<text x="2318.53" y="1529.10" font-size="22" fill="#d8d9da" textLength="84.18" lengthAdjust="spacingAndGlyphs" stroke="#d8d9da" stroke-width="0.45">17:20:20</text>
<rect x="2461.3" y="1209.1" width="2" height="290.8" fill="#fff" fill-opacity="0.15"/>
<text x="2420.32" y="1529.10" font-size="22" fill="#d8d9da" textLength="84.18" lengthAdjust="spacingAndGlyphs" stroke="#d8d9da" stroke-width="0.45">17:20:30</text>
<rect x="2563.1" y="1209.1" width="2" height="290.8" fill="#fff" fill-opacity="0.15"/>
<text x="2522.11" y="1529.10" font-size="22" fill="#d8d9da" textLength="84.18" lengthAdjust="spacingAndGlyphs" stroke="#d8d9da" stroke-width="0.45">17:20:40</text>
<rect x="2664.9" y="1209.1" width="2" height="290.8" fill="#fff" fill-opacity="0.15"/>
<text x="2623.90" y="1529.10" font-size="22" fill="#d8d9da" textLength="84.18" lengthAdjust="spacingAndGlyphs" stroke="#d8d9da" stroke-width="0.45">17:20:50</text>
<rect x="2766.7" y="1209.1" width="2" height="290.8" fill="#fff" fill-opacity="0.15"/>
<text x="2725.69" y="1529.10" font-size="22" fill="#d8d9da" textLength="84.18" lengthAdjust="spacingAndGlyphs" stroke="#d8d9da" stroke-width="0.45">17:21:00</text>
<rect x="2868.4" y="1209.1" width="2" height="290.8" fill="#fff" fill-opacity="0.15"/>
<text x="2827.48" y="1529.10" font-size="22" fill="#d8d9da" textLength="84.18" lengthAdjust="spacingAndGlyphs" stroke="#d8d9da" stroke-width="0.45">17:21:10</text>
<rect x="2970.2" y="1209.1" width="2" height="290.8" fill="#fff" fill-opacity="0.15"/>
<text x="2929.27" y="1529.10" font-size="22" fill="#d8d9da" textLength="84.18" lengthAdjust="spacingAndGlyphs" stroke="#d8d9da" stroke-width="0.45">17:21:20</text>
<rect x="3072.0" y="1209.1" width="2" height="290.8" fill="#fff" fill-opacity="0.15"/>
<text x="3031.06" y="1529.10" font-size="22" fill="#d8d9da" textLength="84.18" lengthAdjust="spacingAndGlyphs" stroke="#d8d9da" stroke-width="0.45">17:21:30</text>
<rect x="3173.8" y="1209.1" width="2" height="290.8" fill="#fff" fill-opacity="0.15"/>
<text x="3132.85" y="1529.10" font-size="22" fill="#d8d9da" textLength="84.18" lengthAdjust="spacingAndGlyphs" stroke="#d8d9da" stroke-width="0.45">17:21:40</text>
<polyline points="324.7,1482.8 935.4,1471.7 1546.2,1483.9 2156.9,1240.6 2767.7,1481.1" stroke="#90b582" stroke-width="3.6" fill="none" stroke-linejoin="round"/>
<polyline points="324.7,1428.3 935.4,1416.7 1546.2,1429.2 2156.9,1396.1 2767.7,1426.1" stroke="#e2bd6c" stroke-width="3.6" fill="none" stroke-linejoin="round"/>
<rect x="82.6" y="1561" width="22.5" height="6" rx="2.5" fill="#90b582"/>
<text x="113.40" y="1572.80" font-size="22" fill="#d8d9da" textLength="461.83" lengthAdjust="spacingAndGlyphs" stroke="#d8d9da" stroke-width="0.45">Tx dev auto-model-worker-1270771004-6d90p</text>
<rect x="594.0" y="1561" width="22.5" height="6" rx="2.5" fill="#e2bd6c"/>
<text x="621.36" y="1572.80" font-size="22" fill="#d8d9da" textLength="466.04" lengthAdjust="spacingAndGlyphs" stroke="#d8d9da" stroke-width="0.45">Rx dev auto-model-worker-1270771004-6d90p</text>
<rect x="3228" y="1589" width="4" height="4" fill="#555"/><rect x="3233.2" y="1587" width="3.8" height="6" fill="#555"/><rect x="3238.8" y="1583.7" width="3.7" height="9.3" fill="#555"/>
<rect x="21" y="1618" width="3224" height="448" fill="#1f1d1e" stroke="#292929" stroke-width="2"/>
<text x="1261.38" y="1652.90" font-size="28" fill="#d8d9da" font-weight="bold" textLength="743.36" lengthAdjust="spacingAndGlyphs" stroke="#d8d9da" stroke-width="0.25">Filesystem Usage: dev auto-model-worker-1270771004-6d90p</text>
<rect x="106.7" y="1678.6" width="3075.9" height="2" fill="#fff" fill-opacity="0.15"/>
<text x="48.60" y="1685.80" font-size="22" fill="#d8d9da" textLength="49.83" lengthAdjust="spacingAndGlyphs" stroke="#d8d9da" stroke-width="0.45">1.0 B</text>
<rect x="106.7" y="1751.1" width="3075.9" height="2" fill="#fff" fill-opacity="0.15"/>
<text x="48.60" y="1758.30" font-size="22" fill="#d8d9da" textLength="49.83" lengthAdjust="spacingAndGlyphs" stroke="#d8d9da" stroke-width="0.45">0.5 B</text>
<rect x="106.7" y="1823.4" width="3075.9" height="2" fill="#fff" fill-opacity="0.15"/>
<text x="66.06" y="1830.60" font-size="22" fill="#d8d9da" textLength="32.04" lengthAdjust="spacingAndGlyphs" stroke="#d8d9da" stroke-width="0.45">0 B</text>
<rect x="106.7" y="1895.7" width="3075.9" height="2" fill="#fff" fill-opacity="0.15"/>
<text x="40.84" y="1902.90" font-size="22" fill="#d8d9da" textLength="56.94" lengthAdjust="spacingAndGlyphs" stroke="#d8d9da" stroke-width="0.45">-0.5 B</text>
<text x="40.84" y="1975.20" font-size="22" fill="#d8d9da" textLength="56.94" lengthAdjust="spacingAndGlyphs" stroke="#d8d9da" stroke-width="0.45">-1.0 B</text>
<rect x="200.0" y="1678.6" width="2" height="291.4" fill="#fff" fill-opacity="0.15"/>
<text x="159.04" y="1999.10" font-size="22" fill="#d8d9da" textLength="84.18" lengthAdjust="spacingAndGlyphs" stroke="#d8d9da" stroke-width="0.45">17:16:50</text>
<rect x="300.9" y="1678.6" width="2" height="291.4" fill="#fff" fill-opacity="0.15"/>
<text x="259.94" y="1999.10" font-size="22" fill="#d8d9da" textLength="84.18" lengthAdjust="spacingAndGlyphs" stroke="#d8d9da" stroke-width="0.45">17:17:00</text>
<rect x="403.5" y="1678.6" width="2" height="291.4" fill="#fff" fill-opacity="0.15"/>
<text x="362.53" y="1999.10" font-size="22" fill="#d8d9da" textLength="84.18" lengthAdjust="spacingAndGlyphs" stroke="#d8d9da" stroke-width="0.45">17:17:10</text>
<rect x="506.1" y="1678.6" width="2" height="291.4" fill="#fff" fill-opacity="0.15"/>
<text x="465.12" y="1999.10" font-size="22" fill="#d8d9da" textLength="84.18" lengthAdjust="spacingAndGlyphs" stroke="#d8d9da" stroke-width="0.45">17:17:20</text>
<rect x="608.7" y="1678.6" width="2" height="291.4" fill="#fff" fill-opacity="0.15"/>
<text x="567.71" y="1999.10" font-size="22" fill="#d8d9da" textLength="84.18" lengthAdjust="spacingAndGlyphs" stroke="#d8d9da" stroke-width="0.45">17:17:30</text>
<rect x="711.3" y="1678.6" width="2" height="291.4" fill="#fff" fill-opacity="0.15"/>
<text x="670.30" y="1999.10" font-size="22" fill="#d8d9da" textLength="84.18" lengthAdjust="spacingAndGlyphs" stroke="#d8d9da" stroke-width="0.45">17:17:40</text>
<rect x="813.8" y="1678.6" width="2" height="291.4" fill="#fff" fill-opacity="0.15"/>
<text x="772.89" y="1999.10" font-size="22" fill="#d8d9da" textLength="84.18" lengthAdjust="spacingAndGlyphs" stroke="#d8d9da" stroke-width="0.45">17:17:50</text>
<rect x="916.4" y="1678.6" width="2" height="291.4" fill="#fff" fill-opacity="0.15"/>
<text x="875.48" y="1999.10" font-size="22" fill="#d8d9da" textLength="84.18" lengthAdjust="spacingAndGlyphs" stroke="#d8d9da" stroke-width="0.45">17:18:00</text>
<rect x="1019.0" y="1678.6" width="2" height="291.4" fill="#fff" fill-opacity="0.15"/>
<text x="978.07" y="1999.10" font-size="22" fill="#d8d9da" textLength="84.18" lengthAdjust="spacingAndGlyphs" stroke="#d8d9da" stroke-width="0.45">17:18:10</text>
<rect x="1121.6" y="1678.6" width="2" height="291.4" fill="#fff" fill-opacity="0.15"/>
<text x="1080.66" y="1999.10" font-size="22" fill="#d8d9da" textLength="84.18" lengthAdjust="spacingAndGlyphs" stroke="#d8d9da" stroke-width="0.45">17:18:20</text>
<rect x="1224.2" y="1678.6" width="2" height="291.4" fill="#fff" fill-opacity="0.15"/>
<text x="1183.25" y="1999.10" font-size="22" fill="#d8d9da" textLength="84.18" lengthAdjust="spacingAndGlyphs" stroke="#d8d9da" stroke-width="0.45">17:18:30</text>
<rect x="1326.8" y="1678.6" width="2" height="291.4" fill="#fff" fill-opacity="0.15"/>
<text x="1285.84" y="1999.10" font-size="22" fill="#d8d9da" textLength="84.18" lengthAdjust="spacingAndGlyphs" stroke="#d8d9da" stroke-width="0.45">17:18:40</text>
<rect x="1429.4" y="1678.6" width="2" height="291.4" fill="#fff" fill-opacity="0.15"/>
<text x="1388.43" y="1999.10" font-size="22" fill="#d8d9da" textLength="84.18" lengthAdjust="spacingAndGlyphs" stroke="#d8d9da" stroke-width="0.45">17:18:50</text>
<rect x="1532.0" y="1678.6" width="2" height="291.4" fill="#fff" fill-opacity="0.15"/>
<text x="1491.02" y="1999.10" font-size="22" fill="#d8d9da" textLength="84.18" lengthAdjust="spacingAndGlyphs" stroke="#d8d9da" stroke-width="0.45">17:19:00</text>
<rect x="1634.6" y="1678.6" width="2" height="291.4" fill="#fff" fill-opacity="0.15"/>
<text x="1593.61" y="1999.10" font-size="22" fill="#d8d9da" textLength="84.18" lengthAdjust="spacingAndGlyphs" stroke="#d8d9da" stroke-width="0.45">17:19:10</text>
<rect x="1737.2" y="1678.6" width="2" height="291.4" fill="#fff" fill-opacity="0.15"/>
<text x="1696.20" y="1999.10" font-size="22" fill="#d8d9da" textLength="84.18" lengthAdjust="spacingAndGlyphs" stroke="#d8d9da" stroke-width="0.45">17:19:20</text>
<rect x="1839.8" y="1678.6" width="2" height="291.4" fill="#fff" fill-opacity="0.15"/>
<text x="1798.79" y="1999.10" font-size="22" fill="#d8d9da" textLength="84.18" lengthAdjust="spacingAndGlyphs" stroke="#d8d9da" stroke-width="0.45">17:19:30</text>
<rect x="1942.3" y="1678.6" width="2" height="291.4" fill="#fff" fill-opacity="0.15"/>
<text x="1901.38" y="1999.10" font-size="22" fill="#d8d9da" textLength="84.18" lengthAdjust="spacingAndGlyphs" stroke="#d8d9da" stroke-width="0.45">17:19:40</text>
<rect x="2044.9" y="1678.6" width="2" height="291.4" fill="#fff" fill-opacity="0.15"/>
<text x="2003.97" y="1999.10" font-size="22" fill="#d8d9da" textLength="84.18" lengthAdjust="spacingAndGlyphs" stroke="#d8d9da" stroke-width="0.45">17:19:50</text>
<rect x="2147.5" y="1678.6" width="2" height="291.4" fill="#fff" fill-opacity="0.15"/>
<text x="2106.56" y="1999.10" font-size="22" fill="#d8d9da" textLength="84.18" lengthAdjust="spacingAndGlyphs" stroke="#d8d9da" stroke-width="0.45">17:20:00</text>
<rect x="2250.1" y="1678.6" width="2" height="291.4" fill="#fff" fill-opacity="0.15"/>
<text x="2209.15" y="1999.10" font-size="22" fill="#d8d9da" textLength="84.18" lengthAdjust="spacingAndGlyphs" stroke="#d8d9da" stroke-width="0.45">17:20:10</text>
<rect x="2352.7" y="1678.6" width="2" height="291.4" fill="#fff" fill-opacity="0.15"/>
<text x="2311.74" y="1999.10" font-size="22" fill="#d8d9da" textLength="84.18" lengthAdjust="spacingAndGlyphs" stroke="#d8d9da" stroke-width="0.45">17:20:20</text>
<rect x="2455.3" y="1678.6" width="2" height="291.4" fill="#fff" fill-opacity="0.15"/>
<text x="2414.33" y="1999.10" font-size="22" fill="#d8d9da" textLength="84.18" lengthAdjust="spacingAndGlyphs" stroke="#d8d9da" stroke-width="0.45">17:20:30</text>
<rect x="2557.9" y="1678.6" width="2" height="291.4" fill="#fff" fill-opacity="0.15"/>
<text x="2516.92" y="1999.10" font-size="22" fill="#d8d9da" textLength="84.18" lengthAdjust="spacingAndGlyphs" stroke="#d8d9da" stroke-width="0.45">17:20:40</text>
<rect x="2660.5" y="1678.6" width="2" height="291.4" fill="#fff" fill-opacity="0.15"/>
<text x="2619.51" y="1999.10" font-size="22" fill="#d8d9da" textLength="84.18" lengthAdjust="spacingAndGlyphs" stroke="#d8d9da" stroke-width="0.45">17:20:50</text>
<rect x="2763.1" y="1678.6" width="2" height="291.4" fill="#fff" fill-opacity="0.15"/>
<text x="2722.10" y="1999.10" font-size="22" fill="#d8d9da" textLength="84.18" lengthAdjust="spacingAndGlyphs" stroke="#d8d9da" stroke-width="0.45">17:21:00</text>
<rect x="2865.7" y="1678.6" width="2" height="291.4" fill="#fff" fill-opacity="0.15"/>
<text x="2824.69" y="1999.10" font-size="22" fill="#d8d9da" textLength="84.18" lengthAdjust="spacingAndGlyphs" stroke="#d8d9da" stroke-width="0.45">17:21:10</text>
<rect x="2968.2" y="1678.6" width="2" height="291.4" fill="#fff" fill-opacity="0.15"/>
<text x="2927.28" y="1999.10" font-size="22" fill="#d8d9da" textLength="84.18" lengthAdjust="spacingAndGlyphs" stroke="#d8d9da" stroke-width="0.45">17:21:20</text>
<rect x="3070.8" y="1678.6" width="2" height="291.4" fill="#fff" fill-opacity="0.15"/>
<text x="3029.87" y="1999.10" font-size="22" fill="#d8d9da" textLength="84.18" lengthAdjust="spacingAndGlyphs" stroke="#d8d9da" stroke-width="0.45">17:21:30</text>
<rect x="3173.4" y="1678.6" width="2" height="291.4" fill="#fff" fill-opacity="0.15"/>
<text x="3132.46" y="1999.10" font-size="22" fill="#d8d9da" textLength="84.18" lengthAdjust="spacingAndGlyphs" stroke="#d8d9da" stroke-width="0.45">17:21:40</text>
<polyline points="301.9,1824.6 2764.1,1824.6" stroke="#e2bd6c" stroke-width="3.6" fill="none" stroke-linejoin="round"/>
<text x="2894.50" y="1849.70" font-size="27" fill="#ffffff" font-style="italic" textLength="321.00" lengthAdjust="spacingAndGlyphs" stroke="#ffffff" stroke-width="0.0">source https://jimmysong.io</text>
<rect x="3266" y="3" width="14" height="1700" fill="#000"/>
<rect x="3268" y="4.7" width="10" height="1696.3" fill="#3a3a3c"/>
<path d="M0,1909 V1897 A12,12 0 0 0 12,1909 Z" fill="#ffffff"/>
<path d="M3280,1909 V1897 A12,12 0 0 1 3268,1909 Z" fill="#ffffff"/>
</svg>
</body></html>
